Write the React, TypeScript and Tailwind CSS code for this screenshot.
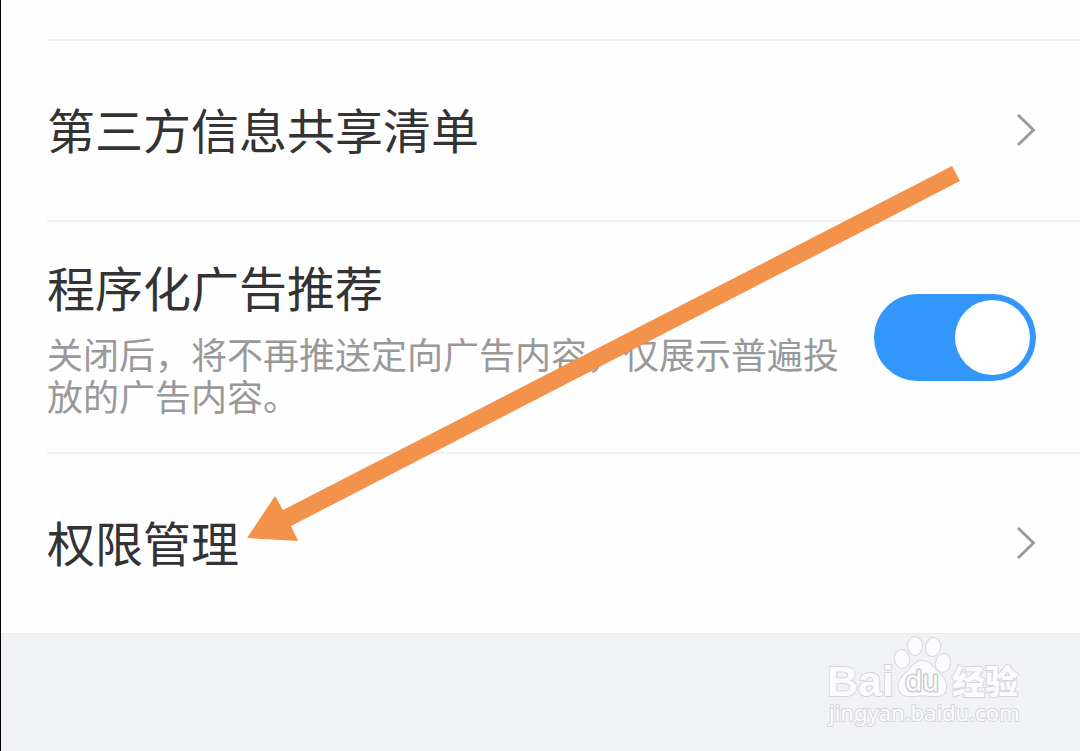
// App.tsx
import { ReactNode } from 'react';

function Chevron() {
  return (
    <svg width="20" height="34" viewBox="0 0 20 34" fill="none" className="shrink-0" aria-hidden="true">
      <path d="M2 2 17.500 17 2 32" stroke="#999999" strokeWidth="2.800" />
    </svg>
  );
}

function LinkRow({ children }: { children: ReactNode }) {
  return (
    <a href="#" className="flex items-center justify-between border-t-2 border-[#f0f0f0] pt-[59px] pb-[60px] pr-11">
      <span className="pb-1 text-[48px] leading-[56px]">{children}</span>
      <Chevron />
    </a>
  );
}

function Arrow() {
  return (
    <svg
      width="714"
      height="378"
      viewBox="0 0 714 378"
      className="pointer-events-none absolute left-[246px] top-[165px]"
      aria-hidden="true"
    >
      <path d="M0 373 28 331 36 345 705 1 713 16 44 361 51 376Z" fill="#f3924a" />
    </svg>
  );
}

function Watermark() {
  return (
    <svg width="200" height="100" viewBox="0 0 200 100" role="img" aria-label="Baidu">
      <g fill="#fcfcfe" stroke="#d5d6da" strokeWidth="2" paintOrder="stroke" strokeLinejoin="round">
        <text x="1" y="62" fontSize="43" fontWeight="700" fontFamily="Liberation Sans, sans-serif">
          Bai
        </text>
        <ellipse cx="76" cy="25" rx="7" ry="9" transform="rotate(-10 76 25)" />
        <ellipse cx="89" cy="12" rx="7" ry="9" />
        <ellipse cx="107" cy="13" rx="7" ry="9" transform="rotate(12 107 13)" />
        <ellipse cx="117" cy="29" rx="7" ry="9" transform="rotate(10 117 29)" />
        <path d="M96 27C89 27 86 33 81 38 75 43 71 49 73 55 75 62 82 63 89 62 94 61 99 61 104 62 112 63 119 62 120 55 121 49 118 44 112 38 107 33 104 27 96 27Z" />
        <text x="79" y="57" fontSize="28" fontFamily="Inter, sans-serif" stroke="#c9cace" strokeWidth="3">
          du
        </text>
        <text
          x="126"
          y="60"
          fontSize="33"
          fontWeight="900"
          fontFamily="Liberation Sans, Noto Sans CJK SC, sans-serif"
        >
          经验
        </text>
        <text x="3" y="87" fontSize="22" fontFamily="Noto Sans, sans-serif">
          jingyan.baidu.com
        </text>
      </g>
    </svg>
  );
}

export default function App() {
  return (
    <div className="relative flex min-h-screen flex-col border-l border-black bg-[#f1f2f6] font-['Noto_Sans_CJK_SC',sans-serif] text-[#333333]">
      <main className="border-b border-[#eaeaea] bg-[#fefefe] pl-[46px] pt-[39px]">
        <LinkRow>第三方信息共享清单</LinkRow>

        <div className="flex items-center gap-8 border-t-2 border-[#f0f0f0] py-9 pr-11">
          <div className="flex-1">
            <label htmlFor="ads" className="block text-[48px] leading-[56px]">
              程序化广告推荐
            </label>
            <p id="ads-note" className="mt-[18px] text-[36px] leading-[42px] text-[#999999]">
              关闭后，将不再推送定向广告内容，仅展示普遍投放的广告内容。
            </p>
          </div>
          <input
            id="ads"
            type="checkbox"
            role="switch"
            aria-describedby="ads-note"
            defaultChecked
            className="flex h-[87px] w-[162px] shrink-0 appearance-none rounded-full bg-[#cccccc] p-[6px] before:size-[75px] before:rounded-full before:bg-white checked:justify-end checked:bg-[#3296fb]"
          />
        </div>

        <LinkRow>权限管理</LinkRow>
      </main>

      <footer className="flex justify-end pr-[54px]">
        <Watermark />
      </footer>

      <Arrow />
    </div>
  );
}
